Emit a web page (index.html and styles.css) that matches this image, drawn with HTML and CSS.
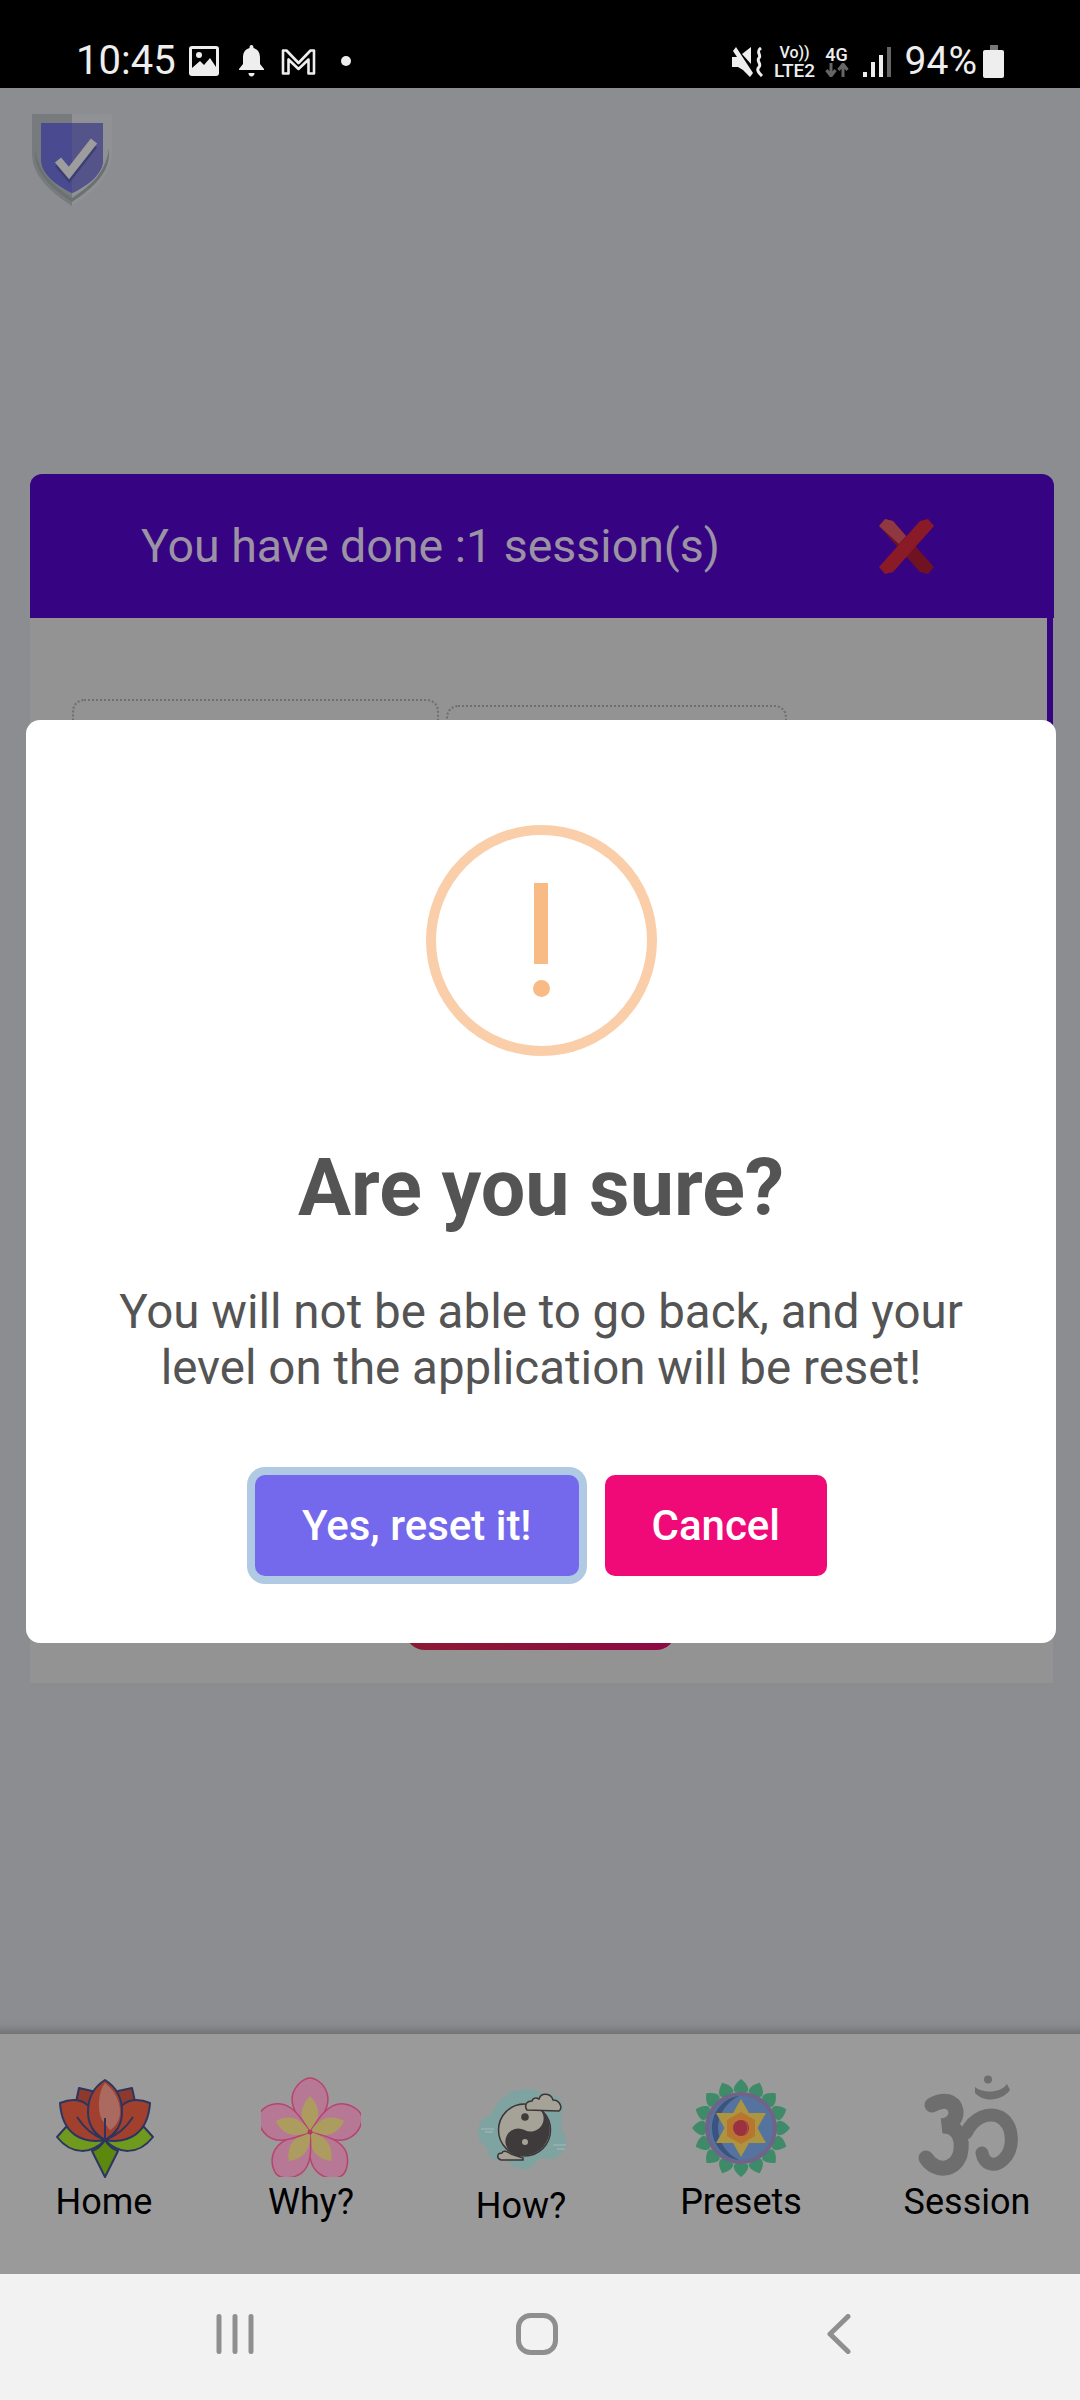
FILE: index.html
```html
<!DOCTYPE html>
<html lang="en">
<head>
    <meta charset="UTF-8">
    <meta name="viewport" content="width=device-width, initial-scale=1.0">
    <title>Session</title>
    <link rel="stylesheet" href="styles.css">
</head>
<body>
<div class="app">
    <header class="status">
        <div class="status-left">
            <span class="clock">10:45</span>
            <svg class="ic-image" width="30" height="30" viewBox="0 0 30 30"><rect width="30" height="30" rx="3" fill="#eee"/><path d="M3 3H27V21L21 12L15 19L11 15L3 22z" fill="#000"/><circle cx="10" cy="9" r="3" fill="#eee"/></svg>
            <svg class="ic-bell" width="27" height="32" viewBox="0 0 27 32"><path d="M13.5 0c1.300 0 2 1 2 3c5 1.500 6.500 5 6.500 10v6l4 5v1H1v-1l4-5v-6c0-5 1.500-8.500 6.500-10c0-2 .7-3 2-3z" fill="#eee"/><path d="M10.500 28h6c0 2-1.300 3.500-3 3.500s-3-1.500-3-3.500z" fill="#eee"/></svg>
            <svg class="ic-gmail" width="35" height="27" viewBox="0 0 35 27"><path d="M2 25.500V2.500h3.500L17.500 15L29.500 2.500H33V25.500H27.500V11.500L17.500 21L7.500 11.500V25.500z" fill="none" stroke="#eee" stroke-width="2.600" stroke-linejoin="round"/></svg>
            <span class="status-dot"></span>
        </div>
        <div class="status-right">
            <svg class="ic-mute" width="31" height="30" viewBox="0 0 31 30"><path d="M0 10H5L1 4L4 0L21 26L18 30L11 23L6 20H0z" fill="#eee"/><path d="M10 7L19 0V17z" fill="#eee"/><path d="M29 1C23 5 30 8 27 11C24 14 30 17 27 20C24 23 27 26 30 29" fill="none" stroke="#eee" stroke-width="3"/></svg>
            <div class="volte"><span class="volte-top">Vo))</span><span class="volte-low">LTE2</span></div>
            <div class="net">
                <span>4G</span>
                <svg width="24" height="14" viewBox="0 0 24 14"><path d="M6 0V10M1.500 7L6 13L10.500 7M18 14V3M13.500 7L18 1L22.500 7" fill="none" stroke="#666" stroke-width="3"/></svg>
            </div>
            <div class="signal">
                <span class="bar b1"></span><span class="bar b2"></span><span class="bar b3"></span><span class="bar b4"></span>
            </div>
            <span class="battery-text">94%</span>
            <div class="battery"><span class="battery-cap"></span><span class="battery-body"></span></div>
        </div>
    </header>

    <main class="content">
        <svg class="shield" width="80" height="92" viewBox="0 0 80 92">
            <path d="M0 0H40V92C25 82 0 65 0 40z" fill="#787b7e"/>
            <path d="M40 0H80V40C80 65 55 82 40 92z" fill="#8f9194"/>
            <path d="M40 88C25 78 3 62 3 40V34C6 62 28 76 40 84C52 76 74 62 77 34V40C77 62 55 78 40 88z" fill="#6a7271"/>
            <path d="M9 9H71V46C71 60 55 72 40 79C25 72 9 60 9 46z" fill="#4a4a90"/>
            <path d="M40 9H71V46C71 60 55 72 40 79z" fill="#54548b"/>
            <path d="M26 50L37 63L62 31" fill="none" stroke="#3e3e73" stroke-width="8"/>
            <path d="M26 46L37 59L62 27" fill="none" stroke="#9d9d9d" stroke-width="8"/>
        </svg>

        <section class="card">
            <div class="card-head">
                <h1 class="card-title">You have done :1 session(s)</h1>
                <svg class="card-close" width="55" height="55" viewBox="0 0 55 55">
                    <path d="M6 0L14 2L55 48L49 55L41 53L0 7z" fill="#6f1222"/>
                    <path d="M49 0L55 7L14 53L6 55L0 48L41 2z" fill="#8a1a27"/>
                    <path d="M0 7L6 0L14 2L27 17L20 25z" fill="#8f3842"/>
                </svg>
            </div>
            <div class="card-body">
                <div class="tabs">
                    <div class="tab tab-first"></div>
                    <div class="tab tab-second"></div>
                </div>
                <div class="reset-btn"></div>
            </div>
        </section>
    </main>

    <nav class="tabbar">
        <a class="tab-item">
            <div class="tab-icon">
            <svg class="icon-lotus" width="125" height="115" viewBox="0 0 125 115">
                <g stroke="#2b3560" stroke-width="2" stroke-linejoin="round">
                    <path d="M63 70C50 84 30 86 15 67L24 57z" fill="#6f9a1e"/>
                    <path d="M63 70C76 84 96 86 111 67L102 57z" fill="#6f9a1e"/>
                    <path d="M50 81L63 107L76 81C70 79 66 75 63 70C60 75 56 79 50 81z" fill="#5d880f"/>
                    <path d="M34 32L37 18L50 21L63 30L76 21L90 18L94 36L63 60z" fill="#8d3a2d"/>
                    <path d="M18 33C30 28 42 29 48 38L63 70C40 74 20 64 18 33z" fill="#a1402c"/>
                    <path d="M108 33C96 28 84 29 78 38L63 70C86 74 106 64 108 33z" fill="#a1402c"/>
                    <path d="M63 10C50 18 46 30 46 42C46 56 54 66 63 70C72 66 80 56 80 42C80 30 76 18 63 10z" fill="#a2402f"/>
                </g>
                <path d="M63 13C56 22 55 40 60 50L68 60C74 56 78 50 78 42C78 30 72 20 63 13z" fill="#ab6a60"/>
                <g fill="none" stroke="#2b3560" stroke-width="2">
                    <path d="M63 48V70M35 47C42 58 52 66 63 70M91 47C84 58 74 66 63 70M50 58C54 64 58 67 63 70M76 58C72 64 68 67 63 70"/>
                </g>
            </svg>
            </div>
            <span>Home</span>
        </a>
        <a class="tab-item">
            <div class="tab-icon">
            <svg class="icon-flower" width="100" height="100" viewBox="0 0 100 100">
                <defs>
                    <g id="petal">
                        <path d="M49 55C36 40 28 28 32 16C36 6 44 1 49 1C54 1 63 6 66 16C70 28 62 40 49 55z" fill="#b67894" stroke="#b8436f" stroke-width="1.500"/>
                        <path d="M49 55C38 42 38 30 49 19C60 30 60 42 49 55z" fill="#ad9c60"/>
                    </g>
                </defs>
                <use href="#petal"/>
                <use href="#petal" transform="rotate(72 49 55)"/>
                <use href="#petal" transform="rotate(144 49 55)"/>
                <use href="#petal" transform="rotate(216 49 55)"/>
                <use href="#petal" transform="rotate(288 49 55)"/>
                <circle cx="49" cy="55" r="2.500" fill="#b03a60"/>
            </svg>
            </div>
            <span>Why?</span>
        </a>
        <a class="tab-item tab-item-how">
            <div class="tab-icon">
            <svg class="icon-yin" width="120" height="110" viewBox="0 0 120 110">
                <g fill="#7fa3a0">
                    <circle cx="65" cy="55" r="36"/><circle cx="35" cy="62" r="18"/><circle cx="38" cy="78" r="12"/>
                    <circle cx="60" cy="42" r="20"/><circle cx="88" cy="38" r="14"/><circle cx="88" cy="72" r="17"/><circle cx="62" cy="82" r="17"/><circle cx="70" cy="35" r="12"/>
                </g>
                <path d="M20 59H33M24 62H32M92 75H105M96 79H104" stroke="#a5bcb8" stroke-width="1"/>
                <circle cx="63.500" cy="60" r="26" fill="#a5a398" stroke="#3d3535" stroke-width="1.500"/>
                <path d="M76.500 37.500A26 26 0 0 1 50.500 82.500A13 13 0 0 1 63.500 60A13 13 0 0 0 76.500 37.500z" fill="#3f3a3c"/>
                <circle cx="64" cy="47" r="3.800" fill="#3f3a3c"/>
                <circle cx="64" cy="72" r="3" fill="#a5a398"/>
                <path d="M66 40C63 36 65 31 71 31C72 27 76 28 78 29C80 22 90 23 92 30C99 30 102 38 98 41z" fill="#a5a398" stroke="#3d3535" stroke-width="1.500"/>
                <path d="M50 90H40C35 88 36 83 41 83C42 80 46 81 50 84L62 88V90z" fill="#a5a398" stroke="#3d3535" stroke-width="1.500"/>
            </svg>
            </div>
            <span>How?</span>
        </a>
        <a class="tab-item">
            <div class="tab-icon">
            <svg class="icon-mandala" width="120" height="115" viewBox="0 0 120 115">
                <defs>
                    <path id="leaf" d="M60 9C65 13 68 17 67 21C64 24 56 24 53 21C52 17 55 13 60 9z" fill="#3f8a68"/>
                </defs>
                <use href="#leaf"/>
                <use href="#leaf" transform="rotate(22.500 60 58)"/>
                <use href="#leaf" transform="rotate(45 60 58)"/>
                <use href="#leaf" transform="rotate(67.500 60 58)"/>
                <use href="#leaf" transform="rotate(90 60 58)"/>
                <use href="#leaf" transform="rotate(112.500 60 58)"/>
                <use href="#leaf" transform="rotate(135 60 58)"/>
                <use href="#leaf" transform="rotate(157.500 60 58)"/>
                <use href="#leaf" transform="rotate(180 60 58)"/>
                <use href="#leaf" transform="rotate(202.500 60 58)"/>
                <use href="#leaf" transform="rotate(225 60 58)"/>
                <use href="#leaf" transform="rotate(247.500 60 58)"/>
                <use href="#leaf" transform="rotate(270 60 58)"/>
                <use href="#leaf" transform="rotate(292.500 60 58)"/>
                <use href="#leaf" transform="rotate(315 60 58)"/>
                <use href="#leaf" transform="rotate(337.500 60 58)"/>
                <circle cx="60" cy="58" r="34" fill="#54749f" stroke="#6f6388" stroke-width="4"/>
                <path d="M58 26C42 28 31 42 31 58C31 74 42 88 58 90C46 84 37 72 37 58C37 44 46 32 58 26z" fill="#3c5380"/>
                <path d="M60 29L85 73H35z" fill="#ad9440"/>
                <path d="M60 87L85 43H35z" fill="#ad9440"/>
                <path d="M60 42L74 50V66L60 74L46 66V50z" fill="#b8752f"/>
                <circle cx="60" cy="58" r="8" fill="#9c3040"/>
                <path d="M62 50.500A8 8 0 0 1 62 65.500A9 9 0 0 0 62 50.500z" fill="#ad4a50"/>
            </svg>
            </div>
            <span>Presets</span>
        </a>
        <a class="tab-item">
            <div class="tab-icon">
            <svg class="icon-om" width="130" height="116" viewBox="0 0 130 116">
                <g fill="none" stroke="#6e6e6e" stroke-linecap="round">
                    <path d="M30 40C42 33 52 36 54 46C55 56 46 60 40 61C56 60 62 74 58 90C52 106 34 108 24 93" stroke-width="15"/>
                    <path d="M64 68C72 52 86 47 98 52C112 60 113 84 101 95C92 103 82 99 80 88" stroke-width="13"/>
                </g>
                <path d="M73 22C80 28 98 29 105 19L108 25C100 36 82 38 73 28z" fill="#6e6e6e"/>
                <circle cx="86" cy="14.500" r="4" fill="#6e6e6e"/>
            </svg>
            </div>
            <span>Session</span>
        </a>
    </nav>

    <footer class="sysbar">
        <div class="sys-btn">
            <svg width="38" height="40" viewBox="0 0 38 40"><path d="M3 2.500V37.500M19 2.500V37.500M35 2.500V37.500" stroke="#8f8f8f" stroke-width="5" stroke-linecap="round"/></svg>
        </div>
        <div class="sys-btn">
            <svg width="42" height="42" viewBox="0 0 42 42"><rect x="2.500" y="2.500" width="37" height="37" rx="12" fill="none" stroke="#8f8f8f" stroke-width="5"/></svg>
        </div>
        <div class="sys-btn">
            <svg width="24" height="40" viewBox="0 0 24 40"><path d="M21 2.500L3 20L21 37.500" fill="none" stroke="#8f8f8f" stroke-width="5" stroke-linecap="round" stroke-linejoin="round"/></svg>
        </div>
    </footer>

    <div class="modal">
        <div class="modal-icon"><span class="modal-mark"></span><span class="modal-dot"></span></div>
        <h2 class="modal-title">Are you sure?</h2>
        <p class="modal-text">You will not be able to go back, and your<br>level on the application will be reset!</p>
        <div class="modal-actions">
            <button class="btn btn-confirm">Yes, reset it!</button>
            <button class="btn btn-cancel">Cancel</button>
        </div>
    </div>
</div>
</body>
</html>
```

FILE: styles.css
```css
* {
    box-sizing: border-box;
}

body {
    margin: 0;
    font-family: Roboto, "Liberation Sans", sans-serif;
}

.app {
    position: relative;
    width: 1080px;
    height: 2400px;
    display: flex;
    flex-direction: column;
    overflow: hidden;
    background: #8c8d91;
}

/* status bar */
.status {
    height: 88px;
    background: #000;
    color: #eee;
    display: flex;
    justify-content: space-between;
    padding: 44px 76px 0 76px;
}

.status-left,
.status-right {
    display: flex;
    align-items: flex-start;
}

.clock {
    font-size: 40px;
    line-height: 34px;
    width: 96px;
}

.ic-image {
    margin: 2px 0 0 17px;
}

.ic-bell {
    margin: 1px 0 0 19px;
}

.ic-gmail {
    margin: 4px 0 0 16px;
}

.status-dot {
    width: 10px;
    height: 10px;
    border-radius: 50%;
    background: #eee;
    margin: 12px 0 0 25px;
}

.ic-mute {
    margin-top: 3px;
}

.volte {
    display: flex;
    flex-direction: column;
    align-items: center;
    width: 42px;
    margin: 0 0 0 11px;
    font-weight: 500;
}

.volte-top {
    font-size: 16px;
    line-height: 17px;
}

.volte-low {
    font-size: 19px;
    line-height: 19px;
}

.net {
    display: flex;
    flex-direction: column;
    align-items: center;
    width: 24px;
    margin: 2px 0 0 9px;
    font-size: 18px;
    line-height: 17px;
    font-weight: 500;
}

.signal {
    display: flex;
    align-items: flex-end;
    gap: 4px;
    height: 30px;
    margin: 3px 0 0 14px;
}

.bar {
    width: 4px;
    background: #eee;
}

.b1 { height: 5px; }
.b2 { height: 15px; }
.b3 { height: 22px; }
.b4 { height: 30px; background: #666; }

.battery-text {
    font-size: 39px;
    line-height: 34px;
    margin-left: 14px;
}

.battery {
    display: flex;
    flex-direction: column;
    align-items: center;
    margin: 1px 0 0 6px;
}

.battery-cap {
    width: 8px;
    height: 5px;
    background: #777;
}

.battery-body {
    width: 21px;
    height: 28px;
    border-radius: 2px;
    background: #eee;
}

/* page behind the dialog */
.content {
    flex: 1;
    padding: 26px 0 0 32px;
    display: flex;
    flex-direction: column;
    box-shadow: inset 0 -14px 10px -10px #6f6f72;
}

.shield {
    display: block;
    flex: none;
}

.card {
    width: 1024px;
    margin: 268px 0 0 -2px;
}

.card-head {
    height: 144px;
    background: #360482;
    border-radius: 12px 12px 0 0;
    display: flex;
    align-items: center;
    padding-left: 111px;
}

.card-title {
    margin: 0;
    width: 738px;
    font-size: 46.5px;
    font-weight: 400;
    color: #9b93a4;
}

.card-body {
    height: 1065px;
    width: 1023px;
    background: #939393;
    display: flex;
    flex-direction: column;
}

.tabs {
    height: 240px;
    border-right: 6px solid #360482;
    padding: 81px 0 0 42px;
    display: flex;
    align-items: flex-start;
    gap: 7px;
}

.tab {
    height: 100px;
    border: 2px dotted #6f6f6f;
    border-radius: 12px;
}

.tab-first {
    width: 367px;
}

.tab-second {
    width: 341px;
    margin-top: 6px;
}

.reset-btn {
    width: 271px;
    height: 100px;
    margin: auto 0 33px 375px;
    border-radius: 0 0 20px 20px;
    background: linear-gradient(to right, #8c1a33, #8c0a45);
}

/* bottom navigation */
.tabbar {
    height: 240px;
    background: #9a9a9a;
    display: grid;
    grid-template-columns: 208px 206px 214px 226px 226px;
}

.tab-item {
    display: flex;
    flex-direction: column;
    align-items: center;
    color: #000;
    font-size: 36px;
    padding-top: 31px;
}

.tab-item span {
    line-height: 40px;
}

.tab-icon {
    height: 117px;
    display: flex;
    justify-content: center;
}

.tab-item-how .tab-icon {
    height: 121px;
}

.icon-lotus,
.icon-yin,
.icon-mandala {
    margin-top: 5px;
}

.icon-flower {
    margin-top: 12px;
}

.sysbar {
    height: 126px;
    background: #f2f2f2;
    display: grid;
    grid-template-columns: repeat(3, 302px);
    justify-content: center;
    padding-right: 6px;
}

.sys-btn {
    display: flex;
    justify-content: center;
    align-items: center;
    padding-bottom: 6px;
}

/* dialog */
.modal {
    position: absolute;
    top: 720px;
    left: 26px;
    width: 1030px;
    height: 923px;
    background: #fff;
    border-radius: 14px;
    padding-top: 105px;
    display: flex;
    flex-direction: column;
    align-items: center;
    color: #545454;
}

.modal-icon {
    width: 231px;
    height: 231px;
    border: 10px solid #facea8;
    border-radius: 50%;
    display: flex;
    flex-direction: column;
    align-items: center;
    padding-top: 48px;
}

.modal-mark {
    width: 14px;
    height: 81px;
    background: #f8bb86;
}

.modal-dot {
    width: 17px;
    height: 17px;
    margin-top: 16px;
    border-radius: 50%;
    background: #f8bb86;
}

.modal-title {
    margin: 82px 0 0;
    font-size: 79px;
    line-height: 100px;
    font-weight: 700;
}

.modal-text {
    margin: 46px 0 0;
    font-size: 47.5px;
    line-height: 56px;
    text-align: center;
}

.modal-actions {
    display: flex;
    gap: 26px;
    margin-top: 79px;
}

.btn {
    height: 101px;
    padding: 0 47px;
    border: none;
    border-radius: 10px;
    color: #fff;
    font-family: inherit;
    font-size: 42px;
    font-weight: 500;
}

.btn-confirm {
    background: #7468ec;
    box-shadow: 0 0 0 8px #b0cae4;
}

.btn-cancel {
    background: #f00a78;
}
```
